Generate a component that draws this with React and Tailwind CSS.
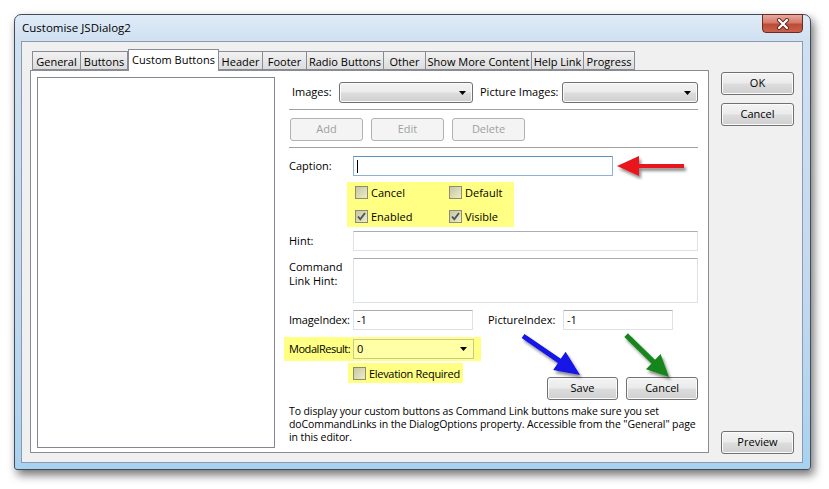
import clsx from "clsx"

const btnBg = "bg-[linear-gradient(#f3f3f3_0%,#ebebeb_48%,#dddddd_52%,#cfcfcf_100%)]"

function Btn({ children, disabled, className }) {
  return (
    <div
      className={clsx(
        "flex items-center justify-center h-[23px] rounded-[3px] border",
        disabled
          ? "border-[#adb2b5] bg-[#f4f4f4] text-[#a0a0a0]"
          : "border-[#707070] text-black shadow-[inset_0_0_0_1px_#fbfbfb] " + btnBg,
        className
      )}
    >
      {children}
    </div>
  )
}

function Triangle() {
  return (
    <svg width="7" height="4" viewBox="0 0 7 4" className="ml-auto mr-[6px] shrink-0">
      <path d="M0 0 H7 L3.5 4 Z" fill="#000" />
    </svg>
  )
}

function Combo({ className }) {
  return (
    <div className={clsx("flex items-center h-[21px] rounded-[3px] border border-[#707070] shadow-[inset_0_0_0_1px_#fbfbfb]", btnBg, className)}>
      <Triangle />
    </div>
  )
}

function TextBox({ value, className, focus }) {
  return (
    <div
      className={clsx(
        "flex items-center h-[20px] bg-white border pl-[3px] shrink-0",
        focus ? "border-[#8fb2d4] border-t-[#5d8fbf]" : "border-[#dde2e8] border-t-[#abadb3]",
        className
      )}
    >
      {value}
    </div>
  )
}

function Check({ checked, label, className }) {
  return (
    <div className={clsx("flex items-center h-[13px] leading-[13px] whitespace-nowrap", className)}>
      <div className="w-[13px] h-[13px] shrink-0 border border-[#8c8c70] bg-[linear-gradient(135deg,#c6c6a2,#ededc8)] flex items-center justify-center">
        {checked && (
          <svg width="11" height="11" viewBox="0 0 11 11">
            <path d="M2 5.5 L4.3 8.3 L9 2" fill="none" stroke="#4b5560" strokeWidth="1.9" />
          </svg>
        )}
      </div>
      <span className="ml-[3px]">{label}</span>
    </div>
  )
}

function arrowPoints(tx, ty, deg, L, H, W, T) {
  const a = (deg * Math.PI) / 180
  const c = Math.cos(a)
  const s = Math.sin(a)
  const pts = [
    [0, 0], [-H, -W / 2], [-H, -T / 2], [-L, -T / 2],
    [-L, T / 2], [-H, T / 2], [-H, W / 2],
  ]
  return pts.map(([x, y]) => `${tx + x * c - y * s},${ty + x * s + y * c}`).join(" ")
}

const tabs = [
  ["General", 49],
  ["Buttons", 48],
  ["Custom Buttons", 91],
  ["Header", 45],
  ["Footer", 45],
  ["Radio Buttons", 78],
  ["Other", 43],
  ["Show More Content", 107],
  ["Help Link", 53],
  ["Progress", 52],
]

const tabW = {
  49: "w-[49px]", 48: "w-[48px]", 91: "w-[91px]", 45: "w-[45px]", 78: "w-[78px]",
  43: "w-[43px]", 107: "w-[107px]", 53: "w-[53px]", 52: "w-[52px]",
}

export default function App() {
  return (
    <div className="relative w-[829px] h-[489px] overflow-hidden bg-white pt-[14px] pl-[14px] font-['Open_Sans',sans-serif] text-[11px] text-black">

      {/* window */}
      <div className="w-[797px] h-[456px] flex flex-col rounded-t-[7px] rounded-b-[3px] border border-[#434d5a] bg-[linear-gradient(180deg,#dfebf7_0%,#cfe0f1_6%,#c3d9ef_60%,#a9d2f0_100%)] shadow-[3px_5px_10px_rgba(0,0,0,0.55)]">

        {/* title bar */}
        <div className="h-[26px] flex items-start">
          <div className="pl-[7px] h-[26px] flex items-center text-[11.5px]">Customise JSDialog2</div>
          <div className="ml-auto mr-[7px] -mt-px w-[41px] h-[19px] rounded-b-[4px] border border-[#6b2b22] bg-[linear-gradient(180deg,#e6aa9e_0%,#d47a6a_45%,#bf4a36_55%,#c9624c_100%)] flex items-center justify-center">
            <svg width="14" height="12" viewBox="0 0 14 12">
              <path d="M3 2 L11 10 M11 2 L3 10" stroke="#5a2a22" strokeWidth="4" strokeLinecap="round" />
              <path d="M3 2 L11 10 M11 2 L3 10" stroke="#fff" strokeWidth="2.2" strokeLinecap="round" />
            </svg>
          </div>
        </div>

        {/* client */}
        <div className="flex-1 ml-[6px] mr-[7px] mb-[6px] border border-[#8a9bb0] bg-[#f0f0f0] flex pl-[8px] pt-[7px] pb-[9px] pr-[8px]">

          {/* tab control */}
          <div className="w-[679px] flex flex-col">
            <div className="h-[21px] flex items-end pl-[2px]">
              {tabs.map(([name, w]) => {
                const sel = name === "Custom Buttons"
                return (
                  <div
                    key={name}
                    className={clsx(
                      "flex justify-center border border-[#898c95] whitespace-nowrap",
                      tabW[w],
                      sel
                        ? "relative z-10 -mb-px h-[22px] bg-white border-b-0 pt-[2px]"
                        : "h-[19px] -ml-px first:ml-0 bg-[linear-gradient(#f2f2f2,#dcdcdc)] pt-[2px]"
                    )}
                  >
                    {name}
                  </div>
                )
              })}
            </div>

            <div className="flex-1 border border-[#898c95] bg-white flex pl-[6px] pt-[6px]">
              {/* list box */}
              <div className="w-[238px] h-[371px] border border-[#828790] bg-white" />

              {/* form */}
              <div className="ml-[14px] w-[409px] flex flex-col">
                <div className="mt-[5px] h-[21px] flex items-center whitespace-nowrap">
                  <div className="w-[50px] pl-[3px]">Images:</div>
                  <Combo className="w-[134px]" />
                  <div className="ml-[7px] w-[82px]">Picture Images:</div>
                  <Combo className="w-[136px]" />
                </div>

                <div className="mt-[6px] h-[2px] border-t border-[#a0a0a0] border-b border-b-white" />

                <div className="mt-[7px] flex gap-[8px] pl-px">
                  <Btn disabled className="w-[73px]">Add</Btn>
                  <Btn disabled className="w-[73px]">Edit</Btn>
                  <Btn disabled className="w-[73px]">Delete</Btn>
                </div>

                <div className="mt-[6px] h-[2px] border-t border-[#a0a0a0] border-b border-b-white" />

                <div className="mt-[7px] flex items-center">
                  <div className="w-[64px]">Caption:</div>
                  <TextBox focus className="w-[260px]" value={<div className="w-px h-[13px] bg-black" />} />
                </div>

                <div className="mt-[6px] ml-[58px] w-[167px] h-[45px] bg-[#ffff84] pt-[4px] pl-[8px] grid grid-cols-[94px_1fr] gap-y-[11px] content-start">
                  <Check label="Cancel" />
                  <Check label="Default" />
                  <Check checked label="Enabled" />
                  <Check checked label="Visible" />
                </div>

                <div className="mt-[4px] flex items-center">
                  <div className="w-[64px]">Hint:</div>
                  <TextBox className="w-[345px]" />
                </div>

                <div className="mt-[7px] flex items-start">
                  <div className="w-[64px] pt-[2px] leading-[14px]">Command<br />Link Hint:</div>
                  <div className="w-[345px] h-[45px] bg-white border border-[#dde2e8] border-t-[#abadb3]" />
                </div>

                <div className="mt-[7px] flex items-center whitespace-nowrap">
                  <div className="w-[64px] tracking-[-0.2px]">ImageIndex:</div>
                  <TextBox className="w-[120px]" value="-1" />
                  <div className="ml-[15px] w-[75px]">PictureIndex:</div>
                  <TextBox className="w-[110px]" value="-1" />
                </div>

                <div className="mt-[7px] -ml-[5px] w-[197px] h-[24px] bg-[#ffff84] pl-[5px] flex items-center whitespace-nowrap">
                  <div className="w-[64px] shrink-0 tracking-[-0.45px]">ModalResult:</div>
                  <div className="w-[121px] h-[20px] border border-[#c9c98e] bg-[#ffffa6] flex items-center pl-[3px]">
                    0
                    <Triangle />
                  </div>
                </div>

                <div className="mt-[2px] flex items-start">
                  <div className="ml-[59px] w-[115px] h-[20px] bg-[#ffff84] pl-[5px] flex items-center tracking-[-0.3px]">
                    <Check label="Elevation Required" />
                  </div>
                  <Btn className="ml-[84px] mt-[14px] w-[72px] h-[22px]">Save</Btn>
                  <Btn className="ml-[8px] mt-[14px] w-[72px] h-[22px]">Cancel</Btn>
                </div>

                <p className="mt-[5px] text-[10.5px] tracking-[-0.1px] leading-[13px] whitespace-nowrap">
                  To display your custom buttons as Command Link buttons make sure you set<br />
                  doCommandLinks in the DialogOptions property. Accessible from the "General" page<br />
                  in this editor.
                </p>
              </div>
            </div>
          </div>

          {/* dialog buttons */}
          <div className="ml-[12px] w-[73px] flex flex-col pt-[23px]">
            <Btn>OK</Btn>
            <Btn className="mt-[8px]">Cancel</Btn>
            <Btn className="mt-auto -mb-px">Preview</Btn>
          </div>
        </div>
      </div>

      {/* annotation arrows */}
      <svg className="absolute inset-0 pointer-events-none" width="829" height="489">
        <defs>
          <filter id="sh" x="-20%" y="-20%" width="140%" height="140%">
            <feDropShadow dx="2" dy="3" stdDeviation="1.5" floodColor="#000" floodOpacity="0.45" />
          </filter>
        </defs>
        <polygon points={arrowPoints(617, 166, 180, 67, 22, 20, 4)} fill="#e8141c" filter="url(#sh)" />
        <polygon points={arrowPoints(580, 375, 34.4, 69, 25, 22, 5)} fill="#1212e6" filter="url(#sh)" />
        <polygon points={arrowPoints(669, 377, 44.3, 60, 22, 21, 5)} fill="#17861a" filter="url(#sh)" />
      </svg>
    </div>
  )
}
